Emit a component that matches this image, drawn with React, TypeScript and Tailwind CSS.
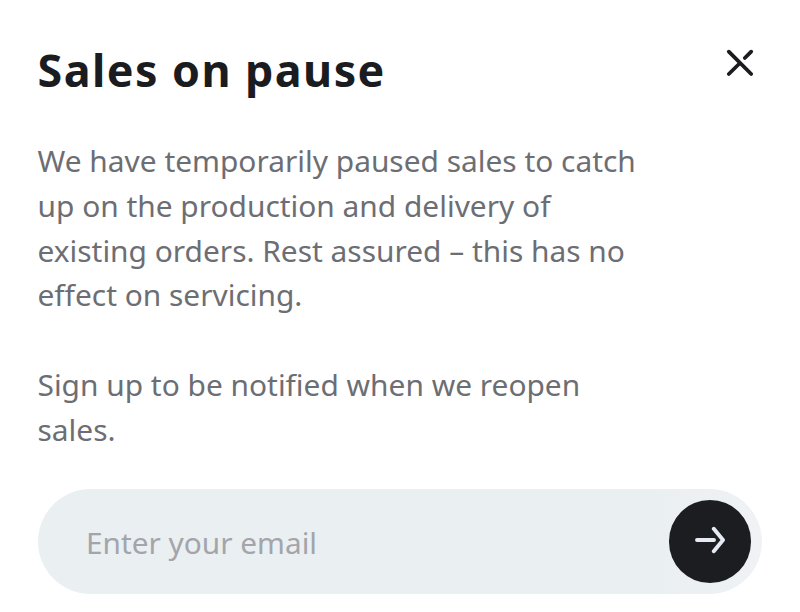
import React from "react";

function CloseIcon() {
  return (
    <svg width="28" height="28" viewBox="0 0 28 28" fill="none" stroke="#1b1c20" strokeWidth="3.8" strokeLinecap="round">
      <path d="M2.8 2.7 L25.2 25 M2.8 25 L14 14 M18.8 9 L25.2 2.7" />
    </svg>
  );
}

function ArrowIcon() {
  return (
    <svg width="30" height="28" viewBox="0 0 30 28" fill="none" stroke="#e6ebf3" strokeWidth="3.9" strokeLinecap="round" strokeLinejoin="round">
      <path d="M2 14 H19 M18.8 2.8 L28 14 L18.8 25.2" />
    </svg>
  );
}

export default function App() {
  return (
    <main className="h-[612px] w-[800px] overflow-hidden bg-white pl-[37.5px] pr-[38px] font-['Noto_Sans',sans-serif]">
      <header className="flex items-start justify-between pt-[40px]">
        <h1 className="text-[44.8px] font-bold leading-[60px] tracking-[1.45px] text-[#1b1c20]">Sales on pause</h1>
        <button aria-label="Close" className="mr-[8px] mt-[9px]">
          <CloseIcon />
        </button>
      </header>
      <div className="mt-[38.7px] whitespace-nowrap text-[29.9px] leading-[44.9px] text-[#6c6e73]">
        <p>
          We have temporarily paused sales to catch<br />
          up on the production and delivery of<br />
          existing orders. Rest assured – this has no<br />
          effect on servicing.
        </p>
        <p className="mt-[44.9px]">
          Sign up to be notified when we reopen<br />
          sales.
        </p>
      </div>
      <form className="mt-[36px] flex h-[104.5px] items-center justify-between rounded-full bg-linear-to-r from-[#eaeff2] from-85% to-[#f0f2f5] pl-[48.5px] pr-[11px]">
        <input
          type="email"
          placeholder="Enter your email"
          className="mt-[3px] w-[500px] bg-transparent text-[29.8px] leading-[45px] text-[#1b1c20] outline-none placeholder:text-[#a3a5a9]"
        />
        <button type="button" aria-label="Submit" className="flex size-[82.5px] items-center justify-center rounded-full bg-[#1b1d21] pb-[3px]">
          <ArrowIcon />
        </button>
      </form>
    </main>
  );
}
